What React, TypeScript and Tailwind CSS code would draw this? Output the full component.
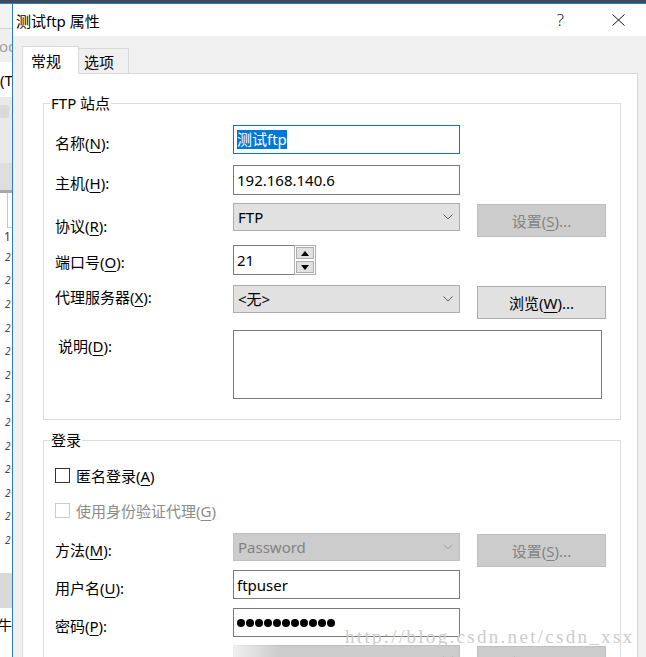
import React from "react";

const Key = ({ c }: { c: string }) => (
  <u className="underline decoration-1 underline-offset-[3px]">{c}</u>
);

const Chevron = ({ color }: { color: string }) => (
  <svg width="10" height="6" viewBox="0 0 10 6">
    <path d="M0.5 0.5 L5 5 L9.5 0.5" fill="none" stroke={color} strokeWidth="1" />
  </svg>
);

const Tri = ({ up }: { up?: boolean }) => (
  <svg width="8" height="5" viewBox="0 0 8 5">
    <polygon points={up ? "0,5 4,0 8,5" : "0,0 4,5 8,0"} fill="#000" />
  </svg>
);

const Select = ({ value, disabled }: { value: string; disabled?: boolean }) => (
  <div
    className={
      disabled
        ? "w-[227px] h-[28px] shrink-0 border border-[#bfbfbf] bg-[#cccccc] text-[#838383] flex items-center justify-between pl-[4px] pr-[6px]"
        : "w-[227px] h-[28px] shrink-0 border border-[#adadad] bg-[#e1e1e1] flex items-center justify-between pl-[4px] pr-[6px]"
    }
  >
    <span>{value}</span>
    <Chevron color={disabled ? "#a6a6a6" : "#5c5c5c"} />
  </div>
);

const Button = ({ children, disabled }: { children: React.ReactNode; disabled?: boolean }) => (
  <div
    className={
      disabled
        ? "ml-[17px] mt-[1px] w-[129px] h-[33px] shrink-0 border border-[#bfbfbf] bg-[#cccccc] text-[#838383] flex items-center justify-center"
        : "ml-[17px] mt-[1px] w-[129px] h-[33px] shrink-0 border border-[#adadad] bg-[#e1e1e1] flex items-center justify-center"
    }
  >
    {children}
  </div>
);

const LeftStrip = () => (
  <div className="w-[12px] shrink-0 flex flex-col overflow-hidden bg-white whitespace-nowrap">
    <div className="h-[24px] shrink-0 bg-[#f3f3f3]" />
    <div className="h-[1px] shrink-0 bg-[#d4d4d4]" />
    <div className="h-[33px] shrink-0 bg-[#efefef] flex items-center text-[#a0a0a0]">
      <span className="-ml-[1px]">oc</span>
    </div>
    <div className="h-[35px] shrink-0 bg-white flex items-center">
      <span>(T</span>
    </div>
    <div className="h-[66px] shrink-0 bg-[#e9e9e9] pt-[8px]">
      <div className="w-[9px] h-[13px] rounded-[2px] bg-[#dadada]" />
    </div>
    <div className="h-[27px] shrink-0 bg-[#dedede]" />
    <div className="h-[3px] shrink-0 bg-[#a9a9a9]" />
    <div className="h-[380px] shrink-0 bg-white flex flex-col">
      <div className="h-[35px] shrink-0 ml-[7px] border-l border-b border-[#c8c8c8]" />
      <div className="h-[17px] shrink-0 flex items-center pl-[4px] text-[12px] text-[#7a1f1f]">1</div>
      {[0, 1, 2, 3, 4, 5, 6, 7, 8, 9, 10, 11, 12].map((i) => (
        <div key={i} className="h-[23.6px] shrink-0 flex items-center pl-[5px] text-[10px] text-[#444] italic">
          2
        </div>
      ))}
    </div>
    <div className="h-[35px] shrink-0 bg-[#d9d9d9]" />
    <div className="h-[34px] shrink-0 flex items-center text-[14px]">
      <span className="-ml-[2px]">牛.</span>
    </div>
    <div className="flex-1 bg-white" />
  </div>
);

const FtpGroup = () => (
  <fieldset className="w-[578px] border border-[#dcdcdc]">
    <legend className="ml-[6px] px-[1px] leading-[20px]">FTP 站点</legend>
    <div className="pl-[11px] pt-[12px] pb-[20px]">
      <div className="flex h-[40px]">
        <span className="w-[178px] shrink-0 mt-[8px]">名称(<Key c="N" />):</span>
        <div className="w-[227px] h-[29px] border border-[#0078d7] bg-white flex items-center pl-[3px]">
          <span className="bg-[#0078d7] text-white leading-[19px]">测试ftp</span>
        </div>
      </div>
      <div className="flex h-[38px]">
        <span className="w-[178px] shrink-0 mt-[8px]">主机(<Key c="H" />):</span>
        <div className="w-[227px] h-[30px] border border-[#7a7a7a] bg-white flex items-center pl-[3px]">
          192.168.140.6
        </div>
      </div>
      <div className="flex h-[42px]">
        <span className="w-[178px] shrink-0 mt-[13px]">协议(<Key c="R" />):</span>
        <Select value="FTP" />
        <Button disabled>
          设置(<Key c="S" />)...
        </Button>
      </div>
      <div className="flex h-[40px]">
        <span className="w-[178px] shrink-0 mt-[7px]">端口号(<Key c="O" />):</span>
        <div className="flex h-[30px]">
          <div className="w-[61px] h-[30px] border border-r-0 border-[#7a7a7a] bg-white flex items-center pl-[3px]">
            21
          </div>
          <div className="w-[22px] h-[30px] border border-[#adadad] bg-white flex flex-col items-center justify-center gap-[2px]">
            <div className="w-[18px] h-[12px] border border-[#adadad] bg-[#e1e1e1] flex items-center justify-center">
              <Tri up />
            </div>
            <div className="w-[18px] h-[12px] border border-[#adadad] bg-[#e1e1e1] flex items-center justify-center">
              <Tri />
            </div>
          </div>
        </div>
      </div>
      <div className="flex h-[45px]">
        <span className="w-[178px] shrink-0 mt-[2px]">代理服务器(<Key c="X" />):</span>
        <Select value="<无>" />
        <Button>
          浏览(<Key c="W" />)...
        </Button>
      </div>
      <div className="flex h-[69px]">
        <span className="w-[178px] shrink-0 mt-[6px] pl-[3px]">说明(<Key c="D" />):</span>
        <div className="w-[369px] h-[69px] border border-[#7a7a7a] bg-white" />
      </div>
    </div>
  </fieldset>
);

const LoginGroup = () => (
  <fieldset className="mt-[10px] w-[578px] border border-[#dcdcdc]">
    <legend className="ml-[6px] px-[1px] leading-[20px]">登录</legend>
    <div className="pl-[11px] pt-[18px]">
      <div className="flex h-[35px]">
        <div className="flex items-center h-[15px] gap-[6px]">
          <div className="w-[15px] h-[15px] border border-[#333333] bg-white" />
          <span>
            匿名登录(<Key c="A" />)
          </span>
        </div>
      </div>
      <div className="flex h-[30px]">
        <div className="flex items-center h-[15px] gap-[6px] text-[#8c8c8c]">
          <div className="w-[15px] h-[15px] border border-[#cccccc] bg-white" />
          <span>
            使用身份验证代理(<Key c="G" />)
          </span>
        </div>
      </div>
      <div className="flex h-[37px]">
        <span className="w-[178px] shrink-0 mt-[7px]">方法(<Key c="M" />):</span>
        <Select value="Password" disabled />
        <Button disabled>
          设置(<Key c="S" />)...
        </Button>
      </div>
      <div className="flex h-[38px]">
        <span className="w-[178px] shrink-0 mt-[8px]">用户名(<Key c="U" />):</span>
        <div className="w-[227px] h-[29px] border border-[#7a7a7a] bg-white flex items-center pl-[3px]">
          ftpuser
        </div>
      </div>
      <div className="flex h-[37px]">
        <span className="w-[178px] shrink-0 mt-[8px]">密码(<Key c="P" />):</span>
        <div className="w-[227px] h-[29px] border border-[#7a7a7a] bg-white flex items-center pl-[3px] gap-[1px]">
          {[0, 1, 2, 3, 4, 5, 6, 7, 8, 9, 10].map((i) => (
            <span key={i} className="w-[8px] h-[8px] rounded-full bg-black" />
          ))}
        </div>
      </div>
      <div className="flex h-[40px]">
        <span className="w-[178px] shrink-0" />
        <Select value="" disabled />
        <Button disabled>
          设置(<Key c="S" />)...
        </Button>
      </div>
    </div>
  </fieldset>
);

export default function App() {
  return (
    <div className="relative w-[646px] h-[657px] overflow-hidden bg-[#f0f0f0] flex flex-col font-['Noto_Sans','Noto_Sans_CJK_SC',sans-serif] text-[15px] leading-[20px] text-black">
      <div className="h-[3px] shrink-0 bg-[#404b57]" />
      <div className="h-[1px] shrink-0 bg-[#2b7bc6]" />
      <div className="flex flex-1 min-h-0">
        <LeftStrip />
        <div className="w-[1px] shrink-0 bg-[#2b7bc6]" />
        <div className="flex-1 min-w-0 flex flex-col">
          <div className="h-[32px] shrink-0 bg-white flex items-center">
            <span className="ml-[3px] pt-[1px] whitespace-nowrap">测试ftp 属性</span>
            <span className="ml-auto text-[17px] text-[#222222] font-light">?</span>
            <svg className="ml-[48px] mr-[21px]" width="13" height="12" viewBox="0 0 13 12">
              <path d="M0.5 0.5 L12.5 11.5 M12.5 0.5 L0.5 11.5" stroke="#111" strokeWidth="1" />
            </svg>
          </div>
          <div className="flex-1 flex flex-col pl-[9px]">
            <div className="relative z-10 -mb-[1px] mt-[10px] flex items-end">
              <div className="w-[57px] h-[28px] bg-white border border-b-0 border-[#d9d9d9] flex items-center pl-[8px]">
                常规
              </div>
              <div className="w-[50px] h-[25px] mb-[1px] bg-[#f0f0f0] border border-l-0 border-b-0 border-[#d9d9d9] flex items-center pl-[5px] pt-[2px]">
                选项
              </div>
            </div>
            <div className="w-[616px] h-[700px] shrink-0 border border-[#d9d9d9] bg-white pl-[20px] pt-[19px]">
              <FtpGroup />
              <LoginGroup />
            </div>
          </div>
        </div>
      </div>
      <div className="absolute left-[220px] top-[645px] w-[60px] h-[12px] bg-linear-to-r from-white/90 to-transparent" />
      <div className="absolute left-[345px] top-[627px] font-['Liberation_Serif',serif] text-[19px] leading-[20px] tracking-[2.3px] text-[#cccccc] whitespace-nowrap">
        http://blog.csdn.net/csdn_xsx
      </div>
    </div>
  );
}
